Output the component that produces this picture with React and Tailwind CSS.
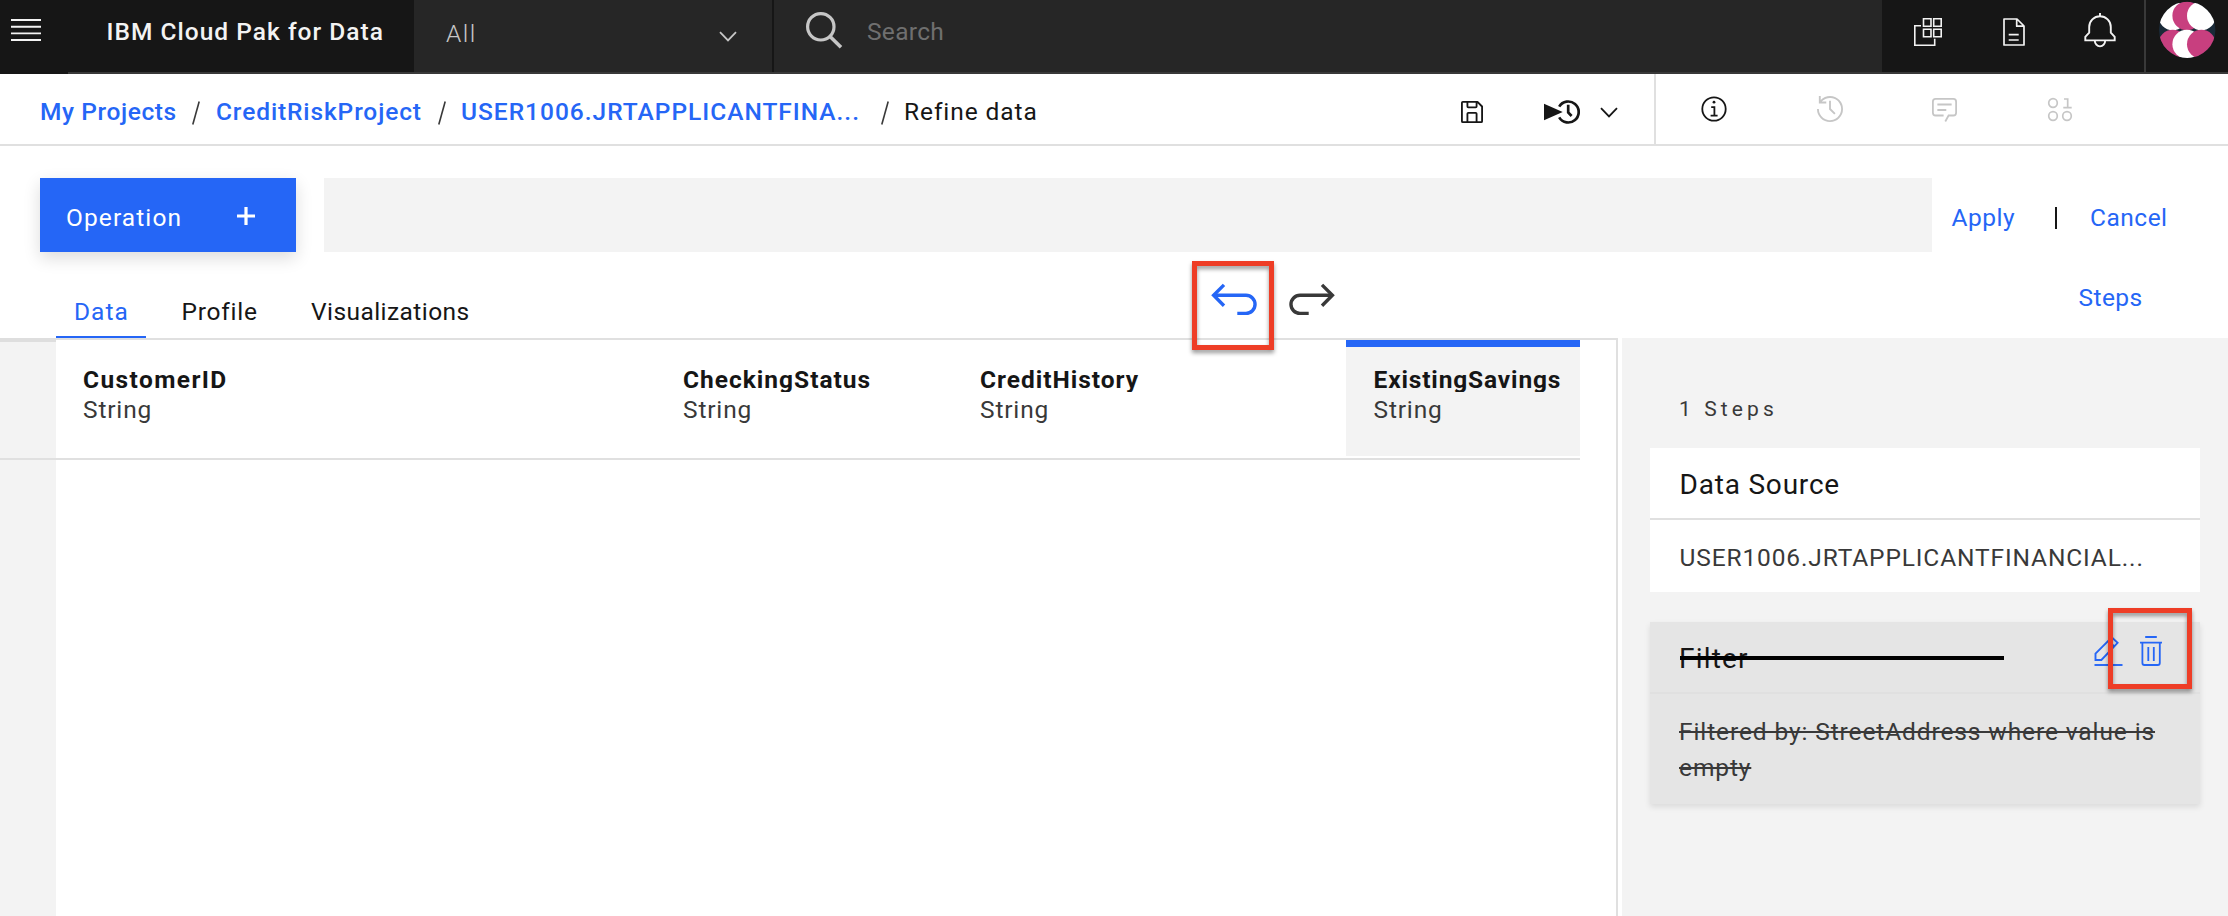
import React from 'react';

const Chevron = ({ className }) => (
  <svg width="18" height="11" viewBox="0 0 18 11" fill="none" stroke="currentColor" strokeWidth="1.8" className={className}>
    <path d="M1 1.2 9 9.4 17 1.2" />
  </svg>
);

const UndoArrow = ({ className }) => (
  <svg width="52" height="40" viewBox="0 0 52 40" fill="none" stroke="currentColor" strokeWidth="3.4" className={className}>
    <path d="M29.3 33.4H38a9.05 9.05 0 0 0 0-18.1H6" />
    <path d="M16 4.9 5.6 15.3 16 25.7" />
  </svg>
);

function TopBar() {
  return (
    <header className="flex h-[74px] bg-[#161616] leading-[32px]">
      <div className="w-[68px] pt-[19px] pl-[11px]">
        <svg width="30" height="22" viewBox="0 0 30 22" stroke="#f3f3f3" strokeWidth="1.9">
          <path d="M0 1H30M0 7.7H30M0 14.4H30M0 21H30" />
        </svg>
      </div>
      <div className="flex flex-1 border-b-2 border-[#393939]">
        <div className="w-[346px] pt-4 pl-[38.5px] font-medium tracking-[1.02px] whitespace-nowrap text-[#f3f3f3]">IBM Cloud Pak for Data</div>
        <div className="flex w-[358px] justify-between bg-[#262626] pt-[18px] pr-[35.5px] pl-[32px] text-[#c6c6c6]">
          <span className="font-light tracking-[1.5px]">All</span>
          <Chevron className="mt-[13px]" />
        </div>
        <div className="w-[2px] bg-[#161616]" />
        <div className="flex flex-1 bg-[#262626] pl-[32px]">
          <svg width="38" height="38" viewBox="0 0 38 38" fill="none" stroke="#c6c6c6" strokeWidth="3.2" className="mt-[11px]">
            <circle cx="14.8" cy="15.8" r="13.2" />
            <path d="M23.8 25.2 35 36.2" strokeWidth="3.6" />
          </svg>
          <span className="pt-4 pl-[23px] tracking-[0.3px] text-[#6f6f6f]">Search</span>
        </div>
        <div className="flex w-[262px] pl-[3px] text-[#f3f3f3]">
          <div className="flex w-[86px] justify-center pt-[18px]">
            <svg width="28" height="28" viewBox="0 0 28 28" fill="none" stroke="currentColor" strokeWidth="1.6">
              <path d="M9.5.8H17V8.3H9.5zM19.7.8H27.2V8.3H19.7zM9.5 11.2H17V18.7H9.5zM19.7 11.2H27.2V18.7H19.7z" />
              <path d="M7 7.7H.8V27.2H20.7V20.8" />
            </svg>
          </div>
          <div className="flex w-[86px] justify-center pt-[18px]">
            <svg width="22" height="28" viewBox="0 0 22 28" fill="none" stroke="currentColor" strokeWidth="1.7" strokeLinejoin="round">
              <path d="M1 1H14L21 8V27H1zM13.7 1.3V8.2H21M5.7 16.7H15.7M5.7 22H15.7" />
            </svg>
          </div>
          <div className="flex w-[85px] justify-center pt-[13px]">
            <svg width="32" height="35" viewBox="0 0 32 35" fill="none" stroke="currentColor" strokeWidth="1.9">
              <path d="M16 0V3.4M1.3 27.4V23.8L5.2 19.7V14a10.8 10.8 0 0 1 21.6 0V19.7L30.7 23.8V27.4zM10.8 27.4a5.2 6 0 0 0 10.4 0" />
            </svg>
          </div>
        </div>
        <div className="w-[2px] bg-[#393939]" />
        <div className="w-[82px] pt-px pl-3">
          <svg width="58" height="58" viewBox="0 0 58 58">
            <clipPath id="avatar"><circle cx="29.2" cy="28.9" r="28.2" /></clipPath>
            <g clipPath="url(#avatar)">
              <rect width="58" height="58" fill="#1a2a38" />
              <circle cx="14.7" cy="14.8" r="14.4" fill="#fff" />
              <circle cx="28.8" cy="14.8" r="14.4" fill="#c83f7f" />
              <circle cx="43.4" cy="14.8" r="14.4" fill="#fff" />
              <circle cx="14.7" cy="43.2" r="14.4" fill="#c83f7f" />
              <circle cx="28.8" cy="43.2" r="14.4" fill="#fff" />
              <circle cx="43.4" cy="43.2" r="14.4" fill="#c83f7f" />
            </g>
          </svg>
        </div>
      </div>
    </header>
  );
}

const Slash = ({ className }) => (
  <svg width="8" height="24" viewBox="0 0 8 24" stroke="#393939" strokeWidth="1.6" className={className}>
    <path d="M.8 23.5 7.2.5" />
  </svg>
);

function Breadcrumbs() {
  return (
    <div className="flex h-[72px] border-b-2 border-[#e0e0e0] leading-[32px] whitespace-nowrap">
      <nav className="flex w-[1461px] pt-[22px] pl-[40px] font-medium text-[#2566f6]">
        <span className="w-[151.5px] tracking-[0.59px]">My Projects</span>
        <Slash className="mt-[5px]" />
        <span className="ml-[16.5px] w-[221.5px] tracking-[0.88px]">CreditRiskProject</span>
        <Slash className="mt-[5px]" />
        <span className="ml-[15.5px] w-[419.5px] tracking-[0.99px]">USER1006.JRTAPPLICANTFINA...</span>
        <Slash className="mt-[5px]" />
        <span className="ml-[15.5px] font-normal tracking-[0.92px] text-[#161616]">Refine data</span>
      </nav>
      <div className="flex w-[193px] items-start text-[#161616]">
        <svg width="22" height="22" viewBox="4 4 24 24" fill="currentColor" className="mt-[27px]">
          <path d="M27.71 9.29l-5-5A1 1 0 0 0 22 4H6A2 2 0 0 0 4 6V26a2 2 0 0 0 2 2H26a2 2 0 0 0 2-2V10A1 1 0 0 0 27.71 9.29ZM12 6h8v4H12Zm8 20H12V18h8Zm2 0V18a2 2 0 0 0-2-2H12a2 2 0 0 0-2 2v8H6V6h4v4a2 2 0 0 0 2 2h8a2 2 0 0 0 2-2V6.41l4 4V26Z" />
        </svg>
        <svg width="36" height="24" viewBox="0 0 36 24" className="mt-[26px] ml-[61px]">
          <path d="M0 3.7 18.7 12 0 20.3z" fill="currentColor" />
          <path d="M15.2 6.6a10.5 10.5 0 1 1 0 10.8M24.2 4.8V12.4L27.6 16" fill="none" stroke="currentColor" strokeWidth="2.7" />
        </svg>
        <Chevron className="mt-[33px] ml-[20px]" />
      </div>
      <div className="flex flex-1 border-l-2 border-[#e0e0e0] text-[#c6c6c6]">
        <div className="flex w-[116px] justify-center pt-[22px] text-[#161616]">
          <svg width="26" height="26" viewBox="0 0 26 26" fill="none" stroke="currentColor" strokeWidth="1.8">
            <circle cx="13" cy="13" r="11.7" />
            <circle cx="13" cy="6.2" r="1.4" fill="currentColor" stroke="none" />
            <path d="M10.2 11.2H13.4V19.6M9.6 19.7H16.6" />
          </svg>
        </div>
        <div className="flex w-[115px] justify-center pt-[22px]">
          <svg width="26" height="26" viewBox="2 2 28 28" fill="currentColor">
            <path d="M20.59 22 15 16.41V7h2v8.58l5 5.01zM16 2A13.94 13.94 0 0 0 6 6.23V2H4v8h8V8H7.08A12 12 0 1 1 4 16H2A14 14 0 1 0 16 2Z" />
          </svg>
        </div>
        <div className="flex w-[115px] justify-center pt-[24px]">
          <svg width="25" height="24" viewBox="2 4 28 26" preserveAspectRatio="none" fill="currentColor">
            <path d="M17.74 30 16 29l4-7h6a2 2 0 0 0 2-2V8a2 2 0 0 0-2-2H6A2 2 0 0 0 4 8V20a2 2 0 0 0 2 2h9v2H6a4 4 0 0 1-4-4V8A4 4 0 0 1 6 4H26a4 4 0 0 1 4 4V20a4 4 0 0 1-4 4H21.16ZM8 10H24V12H8zM8 16H18V18H8z" />
          </svg>
        </div>
        <div className="flex w-[115px] justify-center pt-[23px]">
          <svg width="26" height="26" viewBox="0 0 26 26" fill="none" stroke="currentColor" strokeWidth="1.7">
            <circle cx="6" cy="6" r="4.3" />
            <circle cx="6" cy="19" r="4.3" />
            <circle cx="20" cy="19" r="4.3" />
            <path d="M17 2H20.7V10.6M16.3 10.6H24.7" />
          </svg>
        </div>
      </div>
    </div>
  );
}

function OperationBar() {
  return (
    <div className="flex h-[106px] pt-8 pl-[40px] leading-[32px] text-[#2566f6]">
      <button className="flex h-[74px] w-[256px] items-start bg-[#2566f6] pt-6 pl-[26px] text-white shadow-[0_6px_16px_rgba(0,0,0,0.14)]">
        <span className="w-[143px] text-left tracking-[1.1px]">Operation</span>
        <svg width="18" height="18" viewBox="0 0 18 18" stroke="currentColor" strokeWidth="3.2" className="mt-[5px] ml-[28px]">
          <path d="M9 0V18M0 9H18" />
        </svg>
      </button>
      <div className="ml-[28px] h-[74px] w-[1608px] bg-[#f3f3f3]" />
      <span className="mt-6 ml-[19.5px] w-[103px] tracking-[0.51px]">Apply</span>
      <span className="mt-[29px] h-[22px] w-[2px] bg-[#161616]" />
      <span className="mt-6 ml-[33.5px] tracking-[0.5px]">Cancel</span>
    </div>
  );
}

function TabBar() {
  return (
    <div className="flex h-[86px] leading-[32px] text-[#161616]">
      <div className="flex w-[1208px] items-end pl-[56px]">
        <span className="h-[42px] w-[90px] border-b-2 border-[#2566f6] pl-[18px] tracking-[1px] text-[#2566f6]">Data</span>
        <span className="h-[42px] w-[165px] pl-[35.5px] tracking-[0.75px]">Profile</span>
        <span className="h-[42px] tracking-[0.43px]">Visualizations</span>
      </div>
      <UndoArrow className="mt-[28px] text-[#2566f6]" />
      <UndoArrow className="mt-[28px] ml-[26px] -scale-x-100 text-[#393939]" />
      <span className="mt-[30px] ml-[740.5px] tracking-[0.42px] text-[#2566f6]">Steps</span>
    </div>
  );
}

const Column = ({ className, tracking, name }) => (
  <div className={className}>
    <div className={`h-7 overflow-hidden font-bold text-[#161616] ${tracking}`}>{name}</div>
    <div className="mt-[2px] tracking-[0.83px] text-[#393939]">String</div>
  </div>
);

function DataTable() {
  return (
    <div className="flex w-[1618px]">
      <div className="flex w-[56px] flex-col bg-[#f3f3f3]">
        <div className="h-[4px] bg-[#dedede]" />
        <div className="h-[118px] border-b-2 border-[#e0e0e0]" />
      </div>
      <div className="flex-1 border-t-2 border-r-2 border-[#e0e0e0]">
        <div className="flex h-[120px] w-[1524px] border-b-2 border-[#e0e0e0] leading-[32px] whitespace-nowrap">
          <Column className="w-[600px] pt-6 pl-[27px]" tracking="tracking-[1.4px]" name="CustomerID" />
          <Column className="w-[297px] pt-6 pl-[27px]" tracking="tracking-[1px]" name="CheckingStatus" />
          <Column className="w-[393px] pt-6 pl-[27px]" tracking="tracking-[0.98px]" name="CreditHistory" />
          <Column className="h-[116px] w-[234px] border-t-[7px] border-[#2566f6] bg-[#f3f3f3] pt-[17px] pl-[27.5px]" tracking="tracking-[0.85px]" name="ExistingSavings" />
        </div>
      </div>
    </div>
  );
}

function StepsPanel() {
  return (
    <aside className="ml-[4px] flex flex-1 flex-col bg-[#f3f3f3] px-[28px] leading-[32px] whitespace-nowrap">
      <div className="h-[110px] pt-[55px] pl-[29px] text-[21px] tracking-[4.1px] text-[#393939]">1 Steps</div>
      <section className="h-[144px] bg-white">
        <h2 className="h-[72px] border-b-2 border-[#e0e0e0] pt-[21px] pl-[29.5px] text-[28px] tracking-[0.8px] text-[#161616]">Data Source</h2>
        <p className="pt-[22px] pl-[29.5px] tracking-[0.87px] text-[#393939]">USER1006.JRTAPPLICANTFINANCIAL...</p>
      </section>
      <section className="mt-[30px] h-[182px] bg-[#e5e5e5] shadow-[0_3px_6px_rgba(0,0,0,0.1)]">
        <div className="relative flex h-[72px] border-b-2 border-[#e0e0e0] pt-[14px] pl-[29px]">
          <h2 className="mt-[7px] w-[412.5px] text-[28px] tracking-[1.2px] text-[#161616]">Filter</h2>
          <span className="absolute top-[34px] left-[30px] h-[4px] w-[324px] bg-black" />
          <svg width="30" height="32" viewBox="0 0 30 32" fill="none" stroke="#2566f6" strokeWidth="1.9" className="mt-[-1px] ml-[2px]">
            <path d="M.5 30H28.5" />
            <path d="M1.5 25V18.6L17.8 2.4 23.6 7.8 7.4 25zM14.5 6 20 11.3" />
          </svg>
          <svg width="22" height="30" viewBox="0 0 22 30" fill="none" stroke="#2566f6" strokeWidth="1.8" className="ml-[16.5px]">
            <path d="M5.2 1H16.8M0 6.7H22M2.4 6.7V27a2 2 0 0 0 2 2H17.8a2 2 0 0 0 2-2V6.7M8.3 11V25M13.8 11V25" />
          </svg>
        </div>
        <p className="pt-[20px] pl-[29px] leading-[36px] tracking-[0.89px] text-[#393939] line-through decoration-2">
          Filtered by: StreetAddress where value is
          <br />
          empty
        </p>
      </section>
    </aside>
  );
}

export default function App() {
  return (
    <div className="relative flex h-[916px] w-[2228px] flex-col overflow-hidden bg-white font-['Roboto',sans-serif] text-[24.5px]">
      <TopBar />
      <Breadcrumbs />
      <OperationBar />
      <TabBar />
      <main className="flex flex-1">
        <DataTable />
        <StepsPanel />
      </main>
      <div className="absolute top-[261px] left-[1192px] h-[89px] w-[82px] border-[5px] border-[#ee3d26] drop-shadow-[0_3px_2px_rgba(0,0,0,0.4)]" />
      <div className="absolute top-[608px] left-[2108px] h-[81px] w-[84px] border-[5px] border-[#ee3d26] drop-shadow-[0_3px_2px_rgba(0,0,0,0.4)]" />
    </div>
  );
}
